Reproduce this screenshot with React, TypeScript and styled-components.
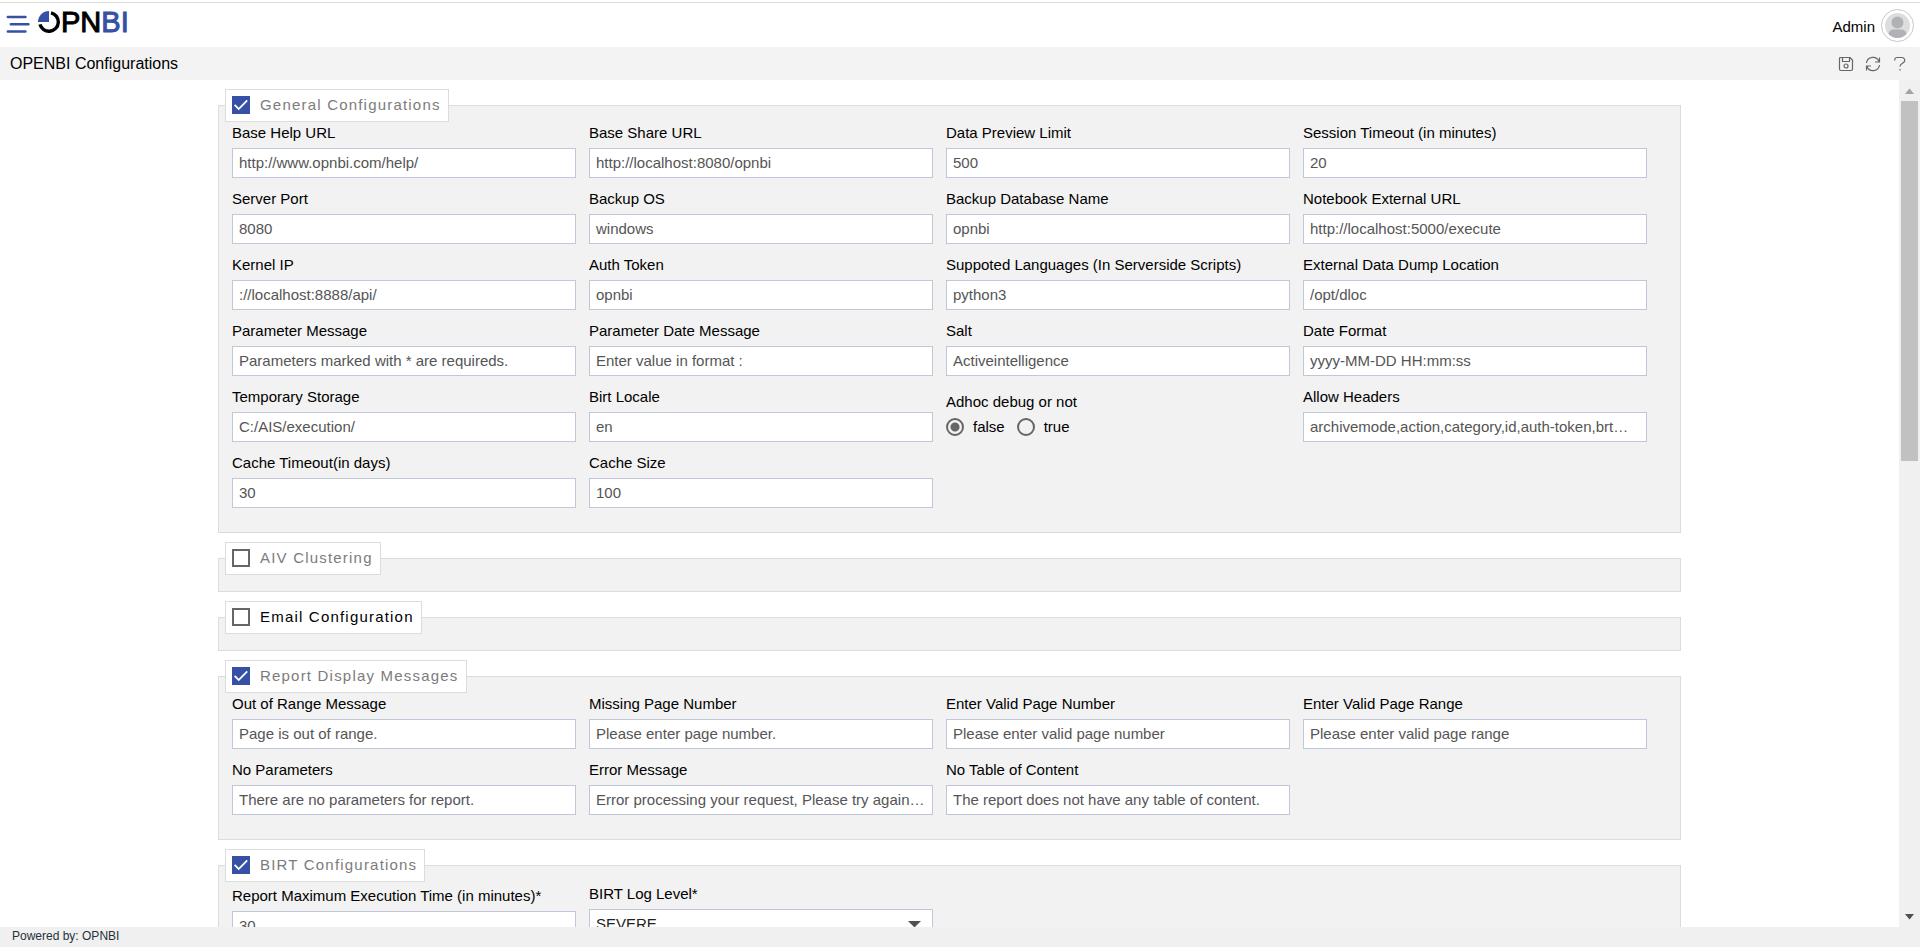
import React, { useState } from "react";
import styled, { createGlobalStyle } from "styled-components";

const sans = '"Liberation Sans", Arial, sans-serif';

const GlobalStyle = createGlobalStyle`
  *, *::before, *::after { box-sizing: border-box; }
  html, body, #root { height: 100%; }
  body { margin: 0; background: #fff; color: #000; font: 15px/18px ${sans}; overflow: hidden; }
  button, input, select { font: inherit; }
`;

const Page = styled.div`
  display: flex;
  flex-direction: column;
  height: 100vh;
  padding-top: 2px;
`;

const TopBar = styled.header`
  display: flex;
  flex: 0 0 45px;
  align-items: center;
  justify-content: space-between;
  padding: 0 6px;
  border-top: 1px solid #dcdcdc;
`;

const Brand = styled.div`
  display: flex;
  align-items: flex-start;
  height: 44px;
  padding-top: 8px;
`;

const IconButton = styled.button`
  display: flex;
  padding: 0;
  border: 0;
  background: none;
  color: #666;
  cursor: pointer;
`;

const Logo = styled.a`
  display: flex;
  align-items: center;
  height: 22px;
  margin-left: 8px;
  color: #000;
  font-size: 29px;
  line-height: 22px;
  text-decoration: none;
  -webkit-text-stroke: 1px currentColor;
`;

const LogoAccent = styled.span`
  color: #3650a5;
`;

const Account = styled.div`
  display: flex;
  align-items: center;
  gap: 6px;
`;

const UserName = styled.span`
  padding-top: 4px;
`;

const TitleBar = styled.div`
  display: flex;
  flex: 0 0 33px;
  align-items: center;
  justify-content: space-between;
  padding: 0 12px 0 10px;
  background: #f3f3f3;
`;

const Title = styled.h1`
  margin: 0;
  font-size: 16px;
  font-weight: 400;
`;

const Tools = styled.div`
  display: flex;
  gap: 11px;
`;

const Body = styled.div`
  display: flex;
  flex: 1;
  min-height: 0;
`;

const Form = styled.form`
  flex: 1;
  min-width: 0;
  overflow: hidden;
  padding: 9px 218px 0;
`;

const Section = styled.fieldset<{ $empty?: boolean }>`
  min-width: 0;
  margin: 0 0 9px;
  padding: ${(p) => (p.$empty ? "0 0 16px" : "2px 33px 24px 13px")};
  border: 1px solid #dcdcdc;
  background: #f2f2f2;
`;

const Legend = styled.legend<{ $empty?: boolean; $strong?: boolean }>`
  height: 33px;
  margin-left: ${(p) => (p.$empty ? "6px" : "-7px")};
  padding: 0 7px 0 6px;
  border: 1px solid #dcdcdc;
  background: #fff;
  color: ${(p) => (p.$strong ? "#000" : "#7c7c7c")};
  letter-spacing: 0.08em;
`;

const LegendLabel = styled.label`
  display: flex;
  align-items: center;
  gap: 10px;
  height: 30px;
`;

const CheckBox = styled.input`
  display: grid;
  place-content: center;
  appearance: none;
  width: 18px;
  height: 18px;
  margin: 0;
  border: 2px solid #666;
  background: #fff;

  &:checked {
    border-color: #3650a5;
    background: #3650a5;
  }

  &:checked::before {
    content: "";
    width: 14px;
    height: 14px;
    background: #fff;
    clip-path: polygon(0 53%, 9% 44%, 34% 69%, 90% 13%, 99% 22%, 34% 88%);
  }
`;

const Grid = styled.div`
  display: grid;
  grid-template-columns: repeat(4, minmax(0, 1fr));
  gap: 12px 13px;
`;

const Field = styled.div<{ $drop?: number }>`
  display: flex;
  flex-direction: column;
  gap: 6px;
  min-height: 54px;
  padding-top: ${(p) => p.$drop ?? 0}px;
`;

const TextBox = styled.input`
  width: 100%;
  height: 30px;
  padding: 0 6px 1px;
  border: 1px solid #c0c7d8;
  border-radius: 0;
  background: #fff;
  color: #555;
  text-overflow: ellipsis;
`;

const SelectWrap = styled.div`
  display: grid;
  align-items: center;

  & > * { grid-area: 1 / 1; }
  & > svg { justify-self: end; margin-right: 12px; pointer-events: none; }
`;

const Select = styled.select`
  appearance: none;
  width: 100%;
  height: 30px;
  padding: 0 6px;
  border: 1px solid #c0c7d8;
  border-radius: 0;
  background: #fff;
  color: #222;
`;

const RadioField = styled.div`
  padding-top: 5px;
`;

const RadioRow = styled.div`
  display: flex;
  gap: 12px;
  padding-top: 7px;
`;

const RadioLabel = styled.label`
  display: flex;
  align-items: center;
  gap: 9px;
`;

const Radio = styled.input`
  appearance: none;
  width: 18px;
  height: 18px;
  margin: 0;
  border: 2px solid #666;
  border-radius: 50%;

  &:checked {
    background: radial-gradient(circle, #666 0 4px, transparent 5px);
  }
`;

const ScrollTrack = styled.div`
  display: flex;
  flex: 0 0 21px;
  flex-direction: column;
  align-items: center;
  justify-content: space-between;
  background: #f0f0f0;
`;

const ScrollTop = styled.div`
  display: flex;
  flex: 0 0 45%;
  flex-direction: column;
  align-items: center;
`;

const ScrollArrow = styled.div`
  display: flex;
  flex: 0 0 21px;
  align-items: center;
  justify-content: center;
`;

const ScrollThumb = styled.div`
  flex: 1;
  width: 17px;
  background: #c1c1c1;
`;

const Footer = styled.footer`
  flex: 0 0 20px;
  padding: 0 12px;
  background: #f0f0f0;
  color: #263238;
  font-size: 12px;
  line-height: 18px;
`;

type TextField = { label: string; value: string; kind?: "text" | "select" | "radio"; drop?: number };
type SectionData = { title: string; on: boolean; strong?: boolean; fields: TextField[] };

const sections: SectionData[] = [
  {
    title: "General Configurations",
    on: true,
    fields: [
      { label: "Base Help URL", value: "http://www.opnbi.com/help/" },
      { label: "Base Share URL", value: "http://localhost:8080/opnbi" },
      { label: "Data Preview Limit", value: "500" },
      { label: "Session Timeout (in minutes)", value: "20" },
      { label: "Server Port", value: "8080" },
      { label: "Backup OS", value: "windows" },
      { label: "Backup Database Name", value: "opnbi" },
      { label: "Notebook External URL", value: "http://localhost:5000/execute" },
      { label: "Kernel IP", value: "://localhost:8888/api/" },
      { label: "Auth Token", value: "opnbi" },
      { label: "Suppoted Languages (In Serverside Scripts)", value: "python3" },
      { label: "External Data Dump Location", value: "/opt/dloc" },
      { label: "Parameter Message", value: "Parameters marked with * are requireds." },
      { label: "Parameter Date Message", value: "Enter value in format :" },
      { label: "Salt", value: "Activeintelligence" },
      { label: "Date Format", value: "yyyy-MM-DD HH:mm:ss" },
      { label: "Temporary Storage", value: "C:/AIS/execution/" },
      { label: "Birt Locale", value: "en" },
      { label: "Adhoc debug or not", value: "false", kind: "radio" },
      { label: "Allow Headers", value: "archivemode,action,category,id,auth-token,brt…" },
      { label: "Cache Timeout(in days)", value: "30" },
      { label: "Cache Size", value: "100" },
    ],
  },
  { title: "AIV Clustering", on: false, fields: [] },
  { title: "Email Configuration", on: false, strong: true, fields: [] },
  {
    title: "Report Display Messages",
    on: true,
    fields: [
      { label: "Out of Range Message", value: "Page is out of range." },
      { label: "Missing Page Number", value: "Please enter page number." },
      { label: "Enter Valid Page Number", value: "Please enter valid page number" },
      { label: "Enter Valid Page Range", value: "Please enter valid page range" },
      { label: "No Parameters", value: "There are no parameters for report." },
      { label: "Error Message", value: "Error processing your request, Please try again…" },
      { label: "No Table of Content", value: "The report does not have any table of content." },
    ],
  },
  {
    title: "BIRT Configurations",
    on: true,
    fields: [
      { label: "Report Maximum Execution Time (in minutes)*", value: "30", drop: 3 },
      { label: "BIRT Log Level*", value: "SEVERE", kind: "select", drop: 1 },
    ],
  },
];

const MenuIcon = () => (
  <svg width="24" height="22" viewBox="0 0 24 22" stroke="#3650a5" strokeWidth="2.400" strokeLinecap="round" aria-hidden="true">
    <path d="M1.800 6H19.500M4.800 13.200H22.500M1.800 20.500H19.500" />
  </svg>
);

const LogoMark = () => (
  <svg width="23" height="22" viewBox="0 0 23 22" aria-hidden="true">
    <path d="M11 0v11H0A11 11 0 0 1 11 0Z" fill="#3650a5" />
    <path d="M13 1.900A9.300 9.300 0 1 1 2 13.300" fill="none" stroke="#000" strokeWidth="3.400" />
  </svg>
);

const Avatar = () => (
  <svg width="33" height="33" viewBox="0 0 33 33" aria-hidden="true">
    <defs>
      <clipPath id="face"><circle cx="16.500" cy="16.500" r="12.500" /></clipPath>
    </defs>
    <circle cx="16.500" cy="16.500" r="16" fill="#fff" stroke="#c8c8c8" />
    <g clipPath="url(#face)">
      <rect width="33" height="33" fill="#dcdddf" />
      <circle cx="16.500" cy="13.500" r="6" fill="#b0b2b6" />
      <path d="M7.500 30v-4.500a5 5 0 0 1 5-5h8a5 5 0 0 1 5 5V30Z" fill="#b0b2b6" />
    </g>
  </svg>
);

const SaveIcon = () => (
  <svg width="16" height="16" viewBox="0 0 16 16" fill="none" stroke="currentColor" strokeWidth="1.200" aria-hidden="true">
    <path d="M2.500 1.500H12L14.500 4V13a1.500 1.500 0 0 1-1.500 1.500H3A1.500 1.500 0 0 1 1.500 13V2.500a1 1 0 0 1 1-1ZM4.500 1.500v4h7v-4" />
    <circle cx="8" cy="10" r="2" />
  </svg>
);

const RefreshIcon = () => (
  <svg width="16" height="16" viewBox="0 0 16 16" fill="none" stroke="currentColor" strokeWidth="1.200" aria-hidden="true">
    <path d="M1.500 7A6.500 6.500 0 0 1 14 5.500M14.500 1.500v4.500H10M14.500 9A6.500 6.500 0 0 1 2 10.500M1.500 14.500V10H6" />
  </svg>
);

const HelpIcon = () => (
  <svg width="16" height="16" viewBox="0 0 16 16" fill="none" stroke="currentColor" strokeWidth="1.200" aria-hidden="true">
    <path d="M2.800 4.500V3.500a2 2 0 0 1 2-2h5a3 3 0 0 1 3 3c0 3-4.800 2.500-4.800 6M8 13v1.600" />
  </svg>
);

const Caret = ({ up = false, size = 9, color = "#505050" }: { up?: boolean; size?: number; color?: string }) => (
  <svg width={size} height={size > 9 ? 7 : 6} viewBox="0 0 10 6" preserveAspectRatio="none" fill={color} aria-hidden="true">
    <path d={up ? "M0 6h10L5 0.500Z" : "M0 0h10L5 5.500Z"} />
  </svg>
);

function FieldView({ id, field }: { id: string; field: TextField }) {
  const [value, setValue] = useState(field.value);
  if (field.kind === "radio") {
    return (
      <RadioField role="radiogroup" aria-labelledby={id}>
        <div id={id}>{field.label}</div>
        <RadioRow>
          {["false", "true"].map((option) => (
            <RadioLabel key={option}>
              <Radio type="radio" name={id} checked={value === option} onChange={() => setValue(option)} />
              {option}
            </RadioLabel>
          ))}
        </RadioRow>
      </RadioField>
    );
  }
  return (
    <Field $drop={field.drop}>
      <label htmlFor={id}>{field.label}</label>
      {field.kind === "select" ? (
        <SelectWrap>
          <Select id={id} value={value} onChange={(e) => setValue(e.target.value)}>
            <option>SEVERE</option>
          </Select>
          <Caret size={13} />
        </SelectWrap>
      ) : (
        <TextBox id={id} type="text" value={value} onChange={(e) => setValue(e.target.value)} />
      )}
    </Field>
  );
}

function SectionView({ index, data }: { index: number; data: SectionData }) {
  const [on, setOn] = useState(data.on);
  return (
    <Section $empty={!on}>
      <Legend $empty={!on} $strong={data.strong}>
        <LegendLabel>
          <CheckBox type="checkbox" checked={on} onChange={() => setOn(!on)} />
          {data.title}
        </LegendLabel>
      </Legend>
      {on && (
        <Grid>
          {data.fields.map((field, i) => (
            <FieldView key={field.label} id={`field-${index}-${i}`} field={field} />
          ))}
        </Grid>
      )}
    </Section>
  );
}

export default function App() {
  return (
    <Page>
      <GlobalStyle />
      <TopBar>
        <Brand>
          <IconButton type="button" aria-label="Menu"><MenuIcon /></IconButton>
          <Logo href="#">
            <LogoMark />
            <span>PN<LogoAccent>BI</LogoAccent></span>
          </Logo>
        </Brand>
        <Account><UserName>Admin</UserName><Avatar /></Account>
      </TopBar>
      <TitleBar>
        <Title>OPENBI Configurations</Title>
        <Tools>
          <IconButton type="button" aria-label="Save"><SaveIcon /></IconButton>
          <IconButton type="button" aria-label="Refresh"><RefreshIcon /></IconButton>
          <IconButton type="button" aria-label="Help"><HelpIcon /></IconButton>
        </Tools>
      </TitleBar>
      <Body>
        <Form>
          {sections.map((data, index) => (
            <SectionView key={data.title} index={index} data={data} />
          ))}
        </Form>
        <ScrollTrack aria-hidden="true">
          <ScrollTop>
            <ScrollArrow><Caret up color="#a3a3a3" /></ScrollArrow>
            <ScrollThumb />
          </ScrollTop>
          <ScrollArrow><Caret /></ScrollArrow>
        </ScrollTrack>
      </Body>
      <Footer>Powered by: OPNBI</Footer>
    </Page>
  );
}
